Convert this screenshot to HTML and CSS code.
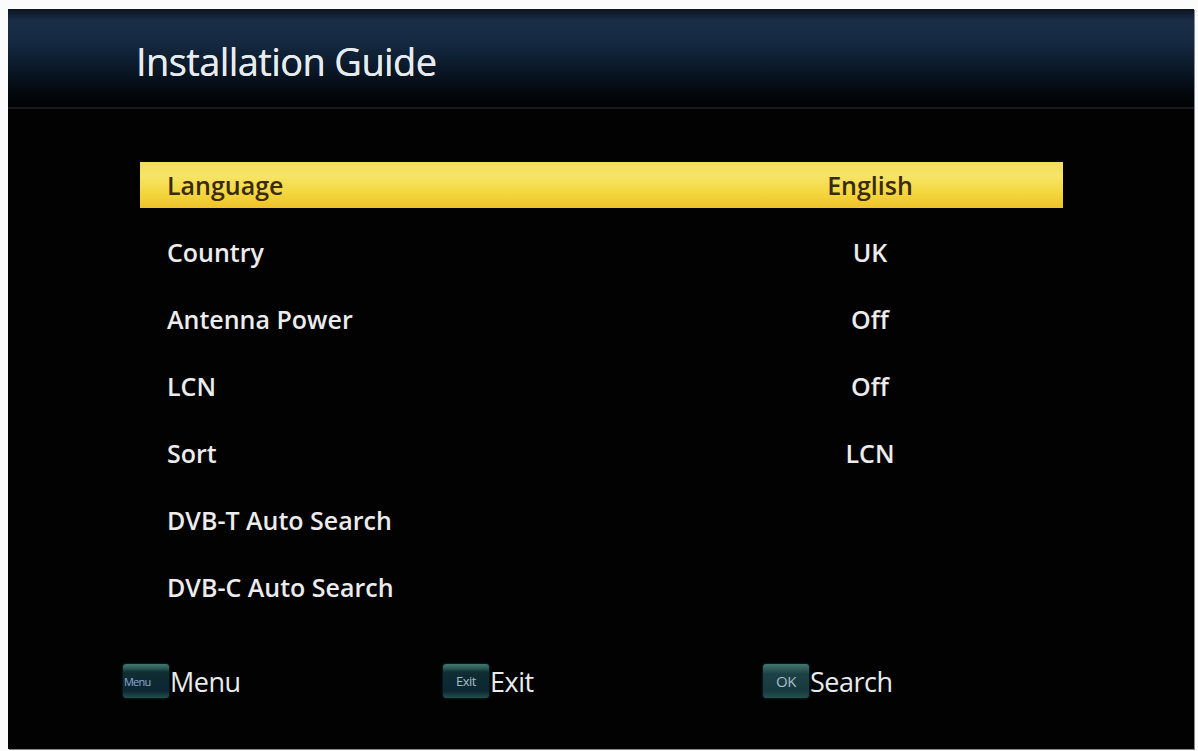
FILE: index.html
```html
<!DOCTYPE html>
<html>
<head>
<meta charset="utf-8">
<link rel="stylesheet" href="styles.css">
</head>
<body>
<div class="screen">
  <header class="header">
    <h1 class="title">Installation Guide</h1>
  </header>
  <ul class="menu">
    <li class="row active"><span class="label">Language</span><span class="value">English</span></li>
    <li class="row"><span class="label">Country</span><span class="value">UK</span></li>
    <li class="row"><span class="label">Antenna Power</span><span class="value">Off</span></li>
    <li class="row"><span class="label">LCN</span><span class="value">Off</span></li>
    <li class="row"><span class="label">Sort</span><span class="value">LCN</span></li>
    <li class="row"><span class="label">DVB-T Auto Search</span><span class="value"></span></li>
    <li class="row"><span class="label">DVB-C Auto Search</span><span class="value"></span></li>
  </ul>
  <footer class="footer">
    <div class="hint"><span class="key key-small">Menu</span><span class="hint-text">Menu</span></div>
    <div class="hint"><span class="key">Exit</span><span class="hint-text">Exit</span></div>
    <div class="hint"><span class="key key-ok">OK</span><span class="hint-text">Search</span></div>
  </footer>
</div>
</body>
</html>
```
FILE: styles.css
```css
html, body {
  margin: 0;
  padding: 0;
  background: #fbfbfb;
}
body {
  padding: 9px 4px 2px 8px;
  font-family: "Open Sans", "DejaVu Sans", sans-serif;
}
.screen {
  width: 1186px;
  height: 740px;
  background: #020203;
  display: flex;
  flex-direction: column;
  box-shadow: 1px 1px 0 #8a8a8a;
}
.header {
  height: 100px;
  background: linear-gradient(to bottom, #0c1420 0px, #1a2e48 12px, #142840 35px, #0a1828 60px, #03070c 85px, #010203 98px);
  border-bottom: 2px solid #161a1c;
  display: flex;
  align-items: flex-start;
  padding-left: 128px;
  padding-top: 28px;
  box-sizing: border-box;
}
.title {
  margin: 0;
  font-weight: 400;
  font-size: 38px;
  line-height: 48px;
  letter-spacing: -0.6px;
  color: #e6ecee;
  text-shadow: 0 0 0.6px #e6ecee;
}
.menu {
  list-style: none;
  margin: 53px 0 0 132px;
  padding: 0;
  width: 923px;
  display: flex;
  flex-direction: column;
  gap: 21px;
}
.row {
  height: 46px;
  display: grid;
  grid-template-columns: 1fr 200px;
  align-items: center;
  padding: 0 93px 0 27px;
  color: #ececec;
  font-size: 25px;
  font-weight: 600;
  letter-spacing: 0;
}
.row.active {
  background: linear-gradient(to bottom, #f3dc5a 0%, #f6e466 30%, #f4d840 65%, #eec22a 100%);
  color: #3a2a0c;
}
.value {
  text-align: center;
}
.footer {
  display: flex;
  padding-left: 115px;
  margin-top: 52px;
  height: 38px;
  align-items: center;
}
.hint {
  width: 320px;
  display: flex;
  align-items: center;
}
.key {
  width: 46px;
  height: 34px;
  box-sizing: border-box;
  border-radius: 3px;
  background: linear-gradient(to bottom, #42786f 0px, #2f5c58 4px, #102e34 8px, #0b2632 27px, #24504e 34px);
  box-shadow: 0 0 3px rgba(60, 110, 110, 0.5);
  color: #a8bcc8;
  font-size: 13px;
  font-weight: 400;
  display: flex;
  align-items: center;
  justify-content: center;
  letter-spacing: -0.5px;
}
.key-small {
  font-size: 11px;
  justify-content: flex-start;
  padding-left: 1px;
  letter-spacing: -0.8px;
  color: #8ea6d0;
}
.key-ok {
  font-size: 15px;
  background: linear-gradient(to bottom, #42786f 0px, #305c5a 5px, #1c4044 10px, #163a40 27px, #24504e 34px);
}
.hint-text {
  color: #e8ecec;
  font-size: 27px;
  font-weight: 400;
  letter-spacing: -0.5px;
  margin-left: 1px;
}
```
